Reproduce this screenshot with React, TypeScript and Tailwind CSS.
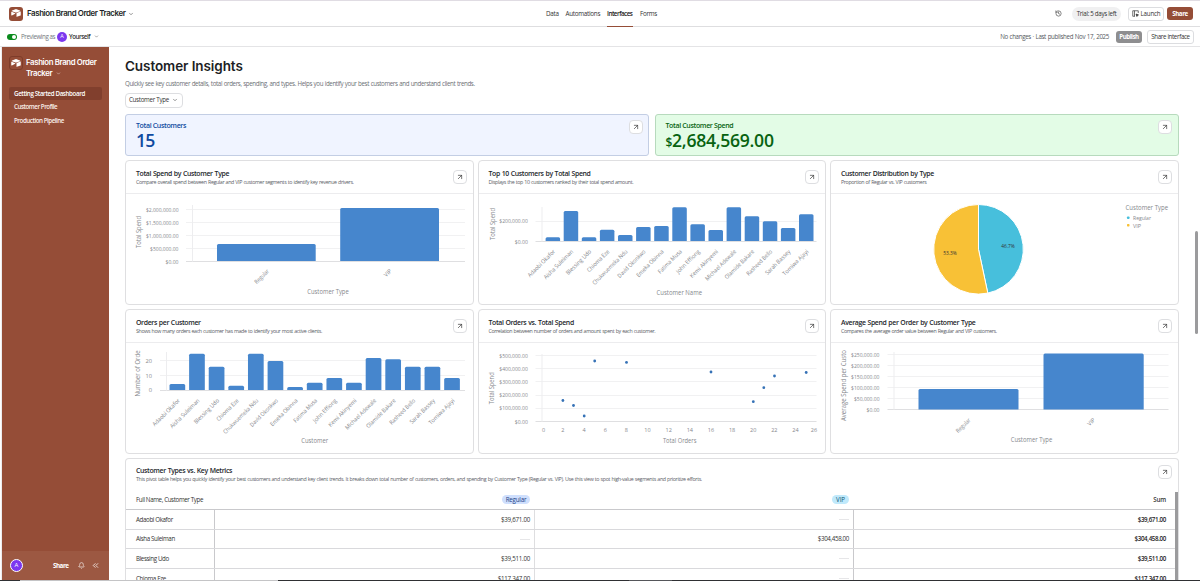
import type { ReactNode } from 'react';
import { ArrowUpRight, Bell, ChevronDown, ChevronsLeft, History } from 'lucide-react';

const BLUE = '#4686cd';
const people = [
  'Adaobi Okafor', 'Aisha Suleiman', 'Blessing Udo', 'Chioma Eze', 'Chukwuemeka Ndu', 'David Okonkwo',
  'Emeka Obinna', 'Fatima Musa', 'John Effiong', 'Kemi Akinyemi', 'Michael Adewale', 'Olamide Bakare',
  'Rasheed Bello', 'Sarah Bassey', 'Tomiwa Ajayi',
];
const labelLengths = [36, 39, 33, 29, 47, 37, 36, 31, 31, 37, 41, 39, 34, 33, 34];

function Logo({ className }: { className: string }) {
  return (
    <span className={`flex shrink-0 items-center justify-center rounded-[3px] bg-[#954d37] ${className}`}>
      <svg viewBox="0 0 20 17" className="h-[8.500px] w-[10px]" fill="#fff">
        <path d="M9 .4a3 3 0 0 1 2 0l7 2.800c.6.2.6.9 0 1.100l-7 2.500a3 3 0 0 1-2 0L2 4.300c-.6-.2-.6-.9 0-1.100z" />
        <path d="M11 8.800c0-.4.2-.7.6-.9l7-2.700c.5-.2.9.1.9.6v6.500c0 .3-.2.6-.5.700l-7.200 2.700c-.4.2-.8-.1-.8-.5z" />
        <path d="M.5 6.200c0-.6.500-.9 1-.7l6.800 2.900c.7.300.7 1 .1 1.300l-6.600 3.200c-.6.300-1.300 0-1.300-.7z" />
      </svg>
    </span>
  );
}

function LaunchIcon() {
  return (
    <svg viewBox="0 0 14 14" className="h-[7px] w-[7px]" fill="none" stroke="#333" strokeWidth="1.400">
      <path d="M6 12.500H1.500v-11h11V6M5 1.500v11" />
      <path d="M8 8l5 1.800-2.200 1-1 2.200z" fill="#333" />
    </svg>
  );
}

function Expand() {
  return (
    <span className="flex h-[14px] w-[14px] shrink-0 items-center justify-center rounded-[4px] border border-[#dddee1] bg-white">
      <ArrowUpRight className="h-[8px] w-[8px] text-[#333]" strokeWidth={2} />
    </span>
  );
}

function Card({ title, text, children }: { title: string; text: string; children: ReactNode }) {
  return (
    <section className="flex h-[145px] flex-col overflow-hidden rounded-[4px] border border-[#dfdfe1] bg-white">
      <header className="flex h-[33px] shrink-0 items-start justify-between border-b border-[#ececee] pl-[10px] pr-[6px] pt-[8px]">
        <div className="whitespace-nowrap pt-[0.500px]">
          <h2 className="text-[6.900px] font-semibold leading-[8px] tracking-[-0.340px] text-[#25272c] [word-spacing:0.400px]">{title}</h2>
          <p className="text-[5.300px] leading-[9px] tracking-[-0.370px] text-[#5c6067] [word-spacing:0.400px]">{text}</p>
        </div>
        <div className="mt-[1px]"><Expand /></div>
      </header>
      {children}
    </section>
  );
}

function Chart({ x, y, children }: { x: number; y: number; children: ReactNode }) {
  return (
    <svg viewBox={`${x} ${y} 347 110`} className="block h-[110px] w-[347px] shrink-0" fill="#85878c">
      {children}
    </svg>
  );
}

function Grid({ ys, x1, x2, axis, top }: { ys: number[]; x1: number; x2: number; axis: number; top: number }) {
  const base = ys[ys.length - 1];
  return (
    <g strokeWidth="1">
      {ys.map((y, i) => (
        <line key={y} x1={x1} x2={x2} y1={y} y2={y} stroke={i === ys.length - 1 ? '#dfdfe1' : '#f1f1f2'} />
      ))}
      <line x1={axis} x2={axis} y1={top} y2={base} stroke="#ededef" />
    </g>
  );
}

function YLabels({ items, x }: { items: [string, number, number][]; x: number }) {
  return (
    <g fontSize="5.500" textAnchor="end">
      {items.map(([t, y, w]) => (
        <text key={t} x={x} y={y + 2} textLength={w} lengthAdjust="spacingAndGlyphs">{t}</text>
      ))}
    </g>
  );
}

function Slanted({ t, x, y, w }: { t: string; x: number; y: number; w: number }) {
  return (
    <text x={x} y={y} fontSize="5.800" textAnchor="end" textLength={w} lengthAdjust="spacingAndGlyphs" transform={`rotate(-45 ${x} ${y})`}>{t}</text>
  );
}

function AxisTitle({ t, x, y, w, vertical = false }: { t: string; x: number; y: number; w: number; vertical?: boolean }) {
  return (
    <text x={x} y={y} fontSize="6.600" textAnchor="middle" textLength={w} lengthAdjust="spacingAndGlyphs" transform={vertical ? `rotate(-90 ${x} ${y})` : undefined}>{t}</text>
  );
}

function Bar({ x, y, w, base }: { x: number; y: number; w: number; base: number }) {
  return <path fill={BLUE} d={`M${x} ${base}V${y + 1.5}q0-1.500 1.500-1.500h${w - 3}q1.500 0 1.500 1.500V${base}z`} />;
}

const spendTops = [237.300, 211, 237.300, 229.700, 235, 227, 226, 207.300, 224.300, 230, 207.300, 216.300, 221.300, 228, 214.300];
const orderTops = [384, 353.700, 366.700, 385.700, 353.700, 361, 387, 382.700, 378, 382.700, 358, 359.300, 366.700, 366.700, 378];
const points = [[594.2, 361], [626, 362.400], [710.500, 372], [805.700, 372.500], [774, 376], [763.300, 387.700], [752.800, 401.700], [562.400, 400.500], [573, 405.500], [583.700, 416]];

const rows = [
  { name: 'Adaobi Okafor', regular: '$39,671.00', vip: '', sum: '$39,671.00' },
  { name: 'Aisha Suleiman', regular: '', vip: '$304,458.00', sum: '$304,458.00' },
  { name: 'Blessing Udo', regular: '$39,511.00', vip: '', sum: '$39,511.00' },
  { name: 'Chioma Eze', regular: '$117,347.00', vip: '', sum: '$117,347.00' },
];

function Cell({ value }: { value: string }) {
  return value ? <span>{value}</span> : <span className="h-px w-[10px] bg-[#e6e6e8]" />;
}

export default function App() {
  return (
    <div className="flex h-[581px] w-[1200px] flex-col overflow-hidden bg-white font-['Open_Sans','Noto_Sans',sans-serif] text-[#333]">
      <header className="flex h-[27px] shrink-0 items-center whitespace-nowrap border-b border-t border-b-[#dedee0] border-t-[#e0dce3] pl-[9px] pr-[7px]">
        <Logo className="h-[14px] w-[14px]" />
        <span className="ml-[4px] w-[99px] font-['Inter',sans-serif] text-[7.900px] font-semibold tracking-[-0.400px] text-[#1d1f25]">Fashion Brand Order Tracker</span>
        <ChevronDown className="ml-[2px] h-[6px] w-[6px]" />
        <nav className="ml-[412px] flex h-full items-center text-[6.300px] tracking-[-0.280px]">
          <span className="w-[19.500px]">Data</span>
          <span className="w-[41.500px]">Automations</span>
          <span className="flex h-full w-[26px] items-center font-semibold tracking-[-0.520px] text-[#222] shadow-[0_1px_0_#954d37]">Interfaces</span>
          <span className="ml-[7px] w-[16px]">Forms</span>
        </nav>
        <History className="ml-auto h-[7px] w-[7px]" />
        <span className="ml-[10px] flex h-[14px] w-[49px] items-center justify-center rounded-full bg-[#f0f0f1] text-[6.200px] tracking-[-0.300px]">Trial: 5 days left</span>
        <span className="ml-[7px] flex h-[14px] w-[36px] items-center justify-center gap-[2px] rounded-[3px] border border-[#dcdde0] text-[6.200px] tracking-[-0.200px]">
          <LaunchIcon />Launch
        </span>
        <span className="ml-[3px] flex h-[13px] w-[26px] items-center justify-center rounded-[3px] bg-[#954d37] text-[6.200px] font-bold tracking-[-0.400px] text-white">Share</span>
      </header>

      <div className="flex h-[20px] shrink-0 items-center whitespace-nowrap border-b border-[#e4e4e6] pl-[7px] pr-[6px] text-[6.200px]">
        <span className="flex h-[6px] w-[10px] items-center justify-end rounded-full bg-[#0a8a1c] pr-[1px]">
          <span className="h-[4px] w-[4px] rounded-full bg-white" />
        </span>
        <span className="ml-[4px] w-[36px] tracking-[-0.400px] text-[#74777d]">Previewing as</span>
        <span className="flex h-[10px] w-[10px] items-center justify-center rounded-full bg-[#7c37ef] text-[5.500px] text-white">A</span>
        <span className="ml-[2px] w-[22px] font-semibold tracking-[-0.440px]">Yourself</span>
        <ChevronDown className="ml-[3px] h-[5px] w-[5px]" />
        <span className="ml-auto tracking-[-0.340px] text-[#55585e] [word-spacing:0.400px]">No changes · Last published Nov 17, 2025</span>
        <span className="ml-[7px] flex h-[12px] w-[26px] items-center justify-center rounded-[3px] bg-[#8e8e90] font-bold tracking-[-0.500px] text-white">Publish</span>
        <span className="ml-[5px] flex h-[14px] w-[47px] items-center justify-center rounded-[3px] border border-[#dcdde0] tracking-[-0.360px]">Share interface</span>
      </div>

      <div className="flex h-[533px] shrink-0">
        <div className="w-[2px] shrink-0 border-r border-[#ececee]" />
        <aside className="flex w-[107px] shrink-0 flex-col whitespace-nowrap bg-[#954d37] text-[#fbeee9]">
          <div className="flex pl-[7px] pt-[9px]">
            <Logo className="h-[14px] w-[14px] border border-[#7e3c2a]" />
            <div className="ml-[3px] pt-px font-['Inter',sans-serif] text-[7.800px] font-semibold leading-[10.800px] tracking-[-0.350px] text-white">
              <div>Fashion Brand Order</div>
              <div className="flex items-center gap-[4px]">Tracker <ChevronDown className="h-[5px] w-[5px]" /></div>
            </div>
          </div>
          <nav className="mx-[7px] mt-[8.400px] flex flex-col text-[6.200px] font-semibold">
            <span className="flex h-[13px] items-center rounded-[2px] bg-[#813f2d] pl-[5px] tracking-[-0.360px] text-white">Getting Started Dashboard</span>
            <span className="flex h-[14px] items-center pl-[5px] tracking-[-0.450px]">Customer Profile</span>
            <span className="flex h-[13px] items-center pl-[5px] tracking-[-0.450px]">Production Pipeline</span>
          </nav>
          <div className="mt-auto flex h-[29px] items-center bg-[#9c5842] pl-[8px] text-white">
            <span className="flex h-[13px] w-[13px] items-center justify-center rounded-full border border-white bg-[#7c37ef] text-[6px]">A</span>
            <span className="ml-[30px] w-[16px] text-[6.300px] font-bold tracking-[-0.500px]">Share</span>
            <Bell className="ml-[9px] h-[7px] w-[7px]" />
            <ChevronsLeft className="ml-[6px] h-[9px] w-[9px]" />
          </div>
        </aside>

        <main className="flex w-[1070px] shrink-0 flex-col pl-[16px] pt-[10px]">
          <h1 className="h-[18px] whitespace-nowrap font-['Inter',sans-serif] text-[13.500px] font-semibold leading-[18px] tracking-[-0.080px] text-[#1d1f25]">Customer Insights</h1>
          <p className="mt-[5px] h-[8px] whitespace-nowrap text-[6.200px] leading-[8px] tracking-[-0.380px] text-[#6c6f75] [word-spacing:0.400px]">
            Quickly see key customer details, total orders, spending, and types. Helps you identify your best customers and understand client trends.
          </p>
          <button className="mt-[4.500px] flex h-[15px] w-[58px] shrink-0 items-center justify-between whitespace-nowrap rounded-[4px] border border-[#dddee1] pl-[3px] pr-[4px] text-[6.200px] tracking-[-0.290px]">
            Customer Type <ChevronDown className="h-[6px] w-[6px]" />
          </button>

          <div className="mt-[6.500px] grid shrink-0 grid-cols-[524px_524px] gap-[5.500px]">
            <div className="flex h-[42px] justify-between rounded-[3px] border border-[#c3cee4] bg-[#f0f4ff] pl-[10px] pr-[5.500px] pt-[5px] text-[#0f4aa0]">
              <div className="pt-px">
                <div className="text-[7px] font-semibold leading-[9px] tracking-[-0.350px]">Total Customers</div>
                <div className="text-[17.600px] font-semibold leading-[20px] tracking-[-0.900px]">15</div>
              </div>
              <Expand />
            </div>
            <div className="flex h-[42px] justify-between rounded-[3px] border border-[#b7dabd] bg-[#e3fce6] pl-[10px] pr-[5.500px] pt-[5px] text-[#086311]">
              <div className="pt-px">
                <div className="text-[7px] font-semibold leading-[9px] tracking-[-0.350px]">Total Customer Spend</div>
                <div className="text-[17.600px] font-semibold leading-[20px] tracking-[-0.280px]"><span className="text-[12px]">$</span>2,684,569.00</div>
              </div>
              <Expand />
            </div>
          </div>

          <div className="mt-[4px] grid shrink-0 grid-cols-[348.500px_348.500px_348.500px] gap-x-[4px] gap-y-[4px]">
            <Card title="Total Spend by Customer Type" text="Compare overall spend between Regular and VIP customer segments to identify key revenue drivers.">
              <Chart x={126} y={194}>
                <Grid ys={[209.500, 222.500, 235.500, 248.500, 261.500]} x1={186} x2={465} axis={192.500} top={205} />
                <YLabels x={178.500} items={[['$2,000,000.00', 209.500, 32.500], ['$1,500,000.00', 222.500, 32.500], ['$1,000,000.00', 235.500, 32.500], ['$500,000.00', 248.500, 28.500], ['$0.00', 261.500, 13]]} />
                <Bar x={217} y={244} w={98.700} base={261} />
                <Bar x={340.200} y={208} w={98.800} base={261} />
                <Slanted t="Regular" x={269.500} y={271.500} w={18} />
                <Slanted t="VIP" x={392} y={271.500} w={8} />
                <AxisTitle t="Customer Type" x={328} y={294} w={41.500} />
                <AxisTitle t="Total Spend" x={141} y={232} w={32} vertical />
              </Chart>
            </Card>
            <Card title="Top 10 Customers by Total Spend" text="Displays the top 10 customers ranked by their total spend amount.">
              <Chart x={478.500} y={194}>
                <Grid ys={[221.500, 241.500]} x1={535} x2={816} axis={541.500} top={207} />
                <YLabels x={527.300} items={[['$200,000.00', 221, 28.500], ['$0.00', 241.500, 13]]} />
                {people.map((p, i) => <Bar key={p} x={545.100 + i * 18.100} y={spendTops[i]} w={14.500} base={241} />)}
                {people.map((p, i) => <Slanted key={p} t={p} x={555 + i * 18.100} y={252} w={labelLengths[i]} />)}
                <AxisTitle t="Customer Name" x={678.800} y={294.800} w={45.500} />
                <AxisTitle t="Total Spend" x={494} y={224} w={32} vertical />
              </Chart>
            </Card>
            <Card title="Customer Distribution by Type" text="Proportion of Regular vs. VIP customers">
              <Chart x={831.500} y={194}>
                <path d="M979 249.300V204.500A44.800 44.800 0 0 1 988.310 293.120Z" fill="#47bfdc" stroke="#fff" strokeWidth="1" />
                <path d="M979 249.300L988.310 293.120A44.800 44.800 0 1 1 979 204.500Z" fill="#f8c136" stroke="#fff" strokeWidth="1" />
                <g fontSize="5.200" textAnchor="middle" fill="#333">
                  <text x="1008.500" y="248" textLength="13.500" lengthAdjust="spacingAndGlyphs">46.7%</text>
                  <text x="950.500" y="254.500" textLength="13.500" lengthAdjust="spacingAndGlyphs">53.3%</text>
                </g>
                <AxisTitle t="Customer Type" x={1147.300} y={209.800} w={42.500} />
                <rect x="1127.500" y="216.500" width="2.500" height="2.500" rx=".7" fill="#47bfdc" />
                <rect x="1127.500" y="224" width="2.500" height="2.500" rx=".7" fill="#f8c136" />
                <g fontSize="5.500">
                  <text x="1133.500" y="220" textLength="18" lengthAdjust="spacingAndGlyphs">Regular</text>
                  <text x="1133.500" y="227.500" textLength="8" lengthAdjust="spacingAndGlyphs">VIP</text>
                </g>
              </Chart>
            </Card>
            <Card title="Orders per Customer" text="Shows how many orders each customer has made to identify your most active clients.">
              <Chart x={126} y={343}>
                <Grid ys={[360.500, 375.500, 390.500]} x1={160} x2={465} axis={166.500} top={352} />
                <YLabels x={152} items={[['20', 360.500, 6.500], ['10', 375.500, 6.500], ['0', 390, 3.300]]} />
                {people.map((p, i) => <Bar key={p} x={169.500 + i * 19.620} y={orderTops[i]} w={15.700} base={390} />)}
                {people.map((p, i) => <Slanted key={p} t={p} x={180.300 + i * 19.620} y={401} w={labelLengths[i]} />)}
                <AxisTitle t="Customer" x={314.700} y={443} w={27} />
                <AxisTitle t="Number of Orde" x={140.300} y={373.500} w={46} vertical />
              </Chart>
            </Card>
            <Card title="Total Orders vs. Total Spend" text="Correlation between number of orders and amount spent by each customer.">
              <Chart x={478.500} y={343}>
                <Grid ys={[355.500, 368.500, 381.500, 395.500, 408.500, 421.500]} x1={535} x2={816} axis={541.500} top={354} />
                <YLabels x={527.300} items={[['$500,000.00', 355.500, 28.500], ['$400,000.00', 368.500, 28.500], ['$300,000.00', 381.500, 28.500], ['$200,000.00', 395, 28.500], ['$100,000.00', 408, 28.500], ['$0.00', 421.500, 13]]} />
                {points.map(([x, y]) => <circle key={x} cx={x} cy={y} r="1.400" fill="#3672b6" />)}
                <g fontSize="5.500" textAnchor="middle">
                  {[0, 2, 4, 6, 8, 10, 12, 14, 16, 18, 20, 22, 24, 26].map((v) => (
                    <text key={v} x={v === 0 ? 543 : v === 26 ? 813.500 : 541.300 + v * 10.570} y="432.300">{v}</text>
                  ))}
                </g>
                <AxisTitle t="Total Orders" x={679.200} y={443} w={33.500} />
                <AxisTitle t="Total Spend" x={494} y={388.300} w={32} vertical />
              </Chart>
            </Card>
            <Card title="Average Spend per Order by Customer Type" text="Compares the average order value between Regular and VIP customers.">
              <Chart x={831.500} y={343}>
                <Grid ys={[354.500, 365.500, 376.500, 387.500, 398.500, 409.500]} x1={888} x2={1169} axis={894.500} top={352} />
                <YLabels x={880} items={[['$250,000.00', 354.500, 28.500], ['$200,000.00', 365.500, 28.500], ['$150,000.00', 376.500, 28.500], ['$100,000.00', 387.500, 28.500], ['$50,000.00', 398.500, 25.500], ['$0.00', 409.500, 13]]} />
                <Bar x={919} y={389} w={100} base={409.500} />
                <Bar x={1044} y={353.500} w={100.200} base={409.500} />
                <Slanted t="Regular" x={971.500} y={420.500} w={18} />
                <Slanted t="VIP" x={1096} y={420.500} w={8} />
                <AxisTitle t="Customer Type" x={1032} y={442} w={41.500} />
                <AxisTitle t="Average Spend per Custo" x={846.500} y={385.500} w={71} vertical />
              </Chart>
            </Card>
          </div>

          <section className="mt-[4px] flex h-[130px] w-[1054px] shrink-0 flex-col overflow-hidden rounded-t-[4px] border border-b-0 border-[#dfdfe1] whitespace-nowrap">
            <header className="flex h-[28px] shrink-0 justify-between pl-[10px] pr-[6px] pt-[6px]">
              <div className="pt-px">
                <h2 className="text-[6.900px] font-semibold leading-[9px] tracking-[-0.340px] text-[#25272c] [word-spacing:0.400px]">Customer Types vs. Key Metrics</h2>
                <p className="text-[5.300px] leading-[8px] tracking-[-0.357px] text-[#5c6067] [word-spacing:0.400px]">
                  This pivot table helps you quickly identify your best customers and understand key client trends. It breaks down total number of customers, orders, and spending by Customer Type (Regular vs. VIP). Use this view to spot high-value segments and prioritize efforts.
                </p>
              </div>
              <Expand />
            </header>
            <div className="flex text-[6.200px] tracking-[-0.370px]">
              <div className="w-[1049px]">
                <div className="grid h-[23px] grid-cols-[89px_320px_319px_321px] items-center border-b border-[#c9c9cc] pt-[3px]">
                  <span className="pl-[10px]">Full Name, Customer Type</span>
                  <span className="flex justify-end pr-[5px]"><span className="flex h-[9px] w-[28px] items-center justify-center rounded-full bg-[#cfdffd] tracking-[-0.200px] text-[#1c4284]">Regular</span></span>
                  <span className="flex justify-end pr-[5px]"><span className="flex h-[9px] w-[17px] items-center justify-center rounded-full bg-[#c0e9fb] tracking-[-0.100px] text-[#0c5572]">VIP</span></span>
                  <span className="pr-[9px] text-right font-semibold tracking-[-0.200px]">Sum</span>
                </div>
                {rows.map((r) => (
                  <div key={r.name} className="grid h-[19.700px] grid-cols-[89px_320px_319px_321px] border-b border-[#d9d9dc]">
                    <span className="flex items-center border-r border-[#c9c9cc] pl-[10px]">{r.name}</span>
                    <span className="flex items-center justify-end border-r border-[#dedee0] pr-[4px] tracking-[-0.260px]"><Cell value={r.regular} /></span>
                    <span className="flex items-center justify-end border-r border-[#c9c9cc] pr-[4px] tracking-[-0.350px]"><Cell value={r.vip} /></span>
                    <span className="flex items-center justify-end pr-[9px] font-semibold tracking-[-0.340px] text-[#222]">{r.sum}</span>
                  </div>
                ))}
              </div>
              <div className="mt-[5px] w-[3px] bg-[#9b9b9d]" />
            </div>
          </section>
        </main>
        <div className="ml-[16px] mt-[184px] h-[103px] w-[3px] rounded-full bg-[#9b9b9d]" />
      </div>
      <footer className="flex h-px shrink-0 bg-[#2f3033]">
        <span className="ml-[20px] w-[258px] bg-[#c4c4c6]" />
        <span className="ml-[351px] w-[43px] bg-[#55565a]" />
      </footer>
    </div>
  );
}
